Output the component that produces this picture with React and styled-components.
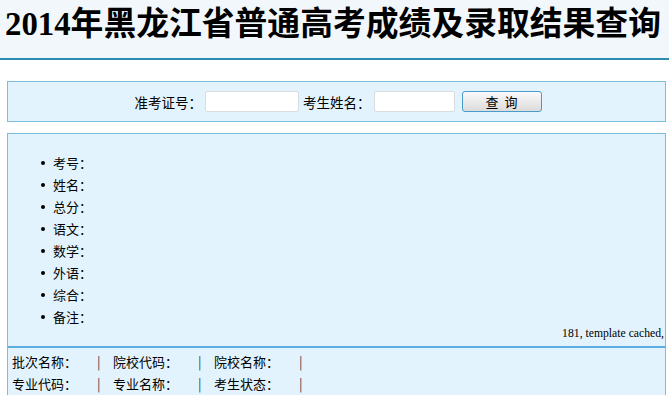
import React from 'react';
import styled, { createGlobalStyle } from 'styled-components';

// Global
const GlobalStyle = createGlobalStyle`
	html, body {
		margin: 0;
		padding: 0;
		background: #ffffff;
	}
	body {
		font-family: "Noto Sans CJK SC", "DejaVu Sans", sans-serif;
		font-size: 13px;
		color: #000;
	}
`;

// Data
const scoreItems = ['考号：', '姓名：', '总分：', '语文：', '数学：', '外语：', '综合：', '备注：'];

const admitRows = [
	['批次名称：', '院校代码：', '院校名称：'],
	['专业代码：', '专业名称：', '考生状态：'],
];

// Component
const App = () => {

	// Return
	return(
		<>
			<GlobalStyle/>
			<Header>
				<Title>2014年黑龙江省普通高考成绩及录取结果查询</Title>
			</Header>
			<Main>
				<SearchBox>
					<Label>准考证号：</Label>
					<Input type="text" $width={ 94 } />
					<Label>考生姓名：</Label>
					<Input type="text" $width={ 81 } />
					<Button type="button">查&nbsp;&nbsp;询</Button>
				</SearchBox>
				<ResultBox>
					<ScoreList>
						{
							scoreItems.map((item) => {
								return <li key={ item }>{ item }</li>;
							})
						}
					</ScoreList>
					<Note>181, template cached,</Note>
					<AdmitInfo>
						{
							admitRows.map((row, index) => {
								return(
									<AdmitRow key={ index }>
										{
											row.map((cell) => {
												return(
													<AdmitCell key={ cell }>
														<CellLabel>{ cell }</CellLabel>
														<Sep>|</Sep>
													</AdmitCell>
												);
											})
										}
									</AdmitRow>
								);
							})
						}
					</AdmitInfo>
				</ResultBox>
			</Main>
		</>
	);

};

// Styled
const Header = styled.header`
	height: 58px;
	background: #f2f7fb;
	border-bottom: 2px solid #2b8bb0;
	padding-left: 5px;
`;

const Title = styled.h1`
	margin: 0;
	font-family: "Liberation Serif", "Noto Sans CJK SC", serif;
	font-size: 32.8px;
	font-weight: bold;
	line-height: 48px;
	white-space: nowrap;
`;

const Main = styled.main`
	padding: 21px 3px 0 7px;
	display: flex;
	flex-direction: column;
	gap: 11px;
`;

const SearchBox = styled.div`
	height: 39px;
	background: #e3f3fd;
	border: 1px solid #7dbddc;
	display: flex;
	align-items: center;
	justify-content: center;
`;

const Label = styled.span`
	font-size: 13.5px;
	line-height: 20px;
	margin: 0 3px;
`;

const Input = styled.input`
	box-sizing: border-box;
	width: ${ ({ $width }) => $width }px;
	height: 21px;
	border: 1px solid #d8dde2;
	border-radius: 2px;
	background: #fff;
	padding: 0 2px;
	margin: 0 1px 0 0;
	outline: none;
`;

const Button = styled.button`
	box-sizing: border-box;
	width: 80px;
	height: 21px;
	margin-left: 6px;
	border: 1px solid #4a9cc8;
	border-radius: 3px;
	background: linear-gradient(#fafafa, #dcdcdc);
	font-family: "Noto Sans CJK SC", sans-serif;
	font-size: 13px;
	line-height: 17px;
	padding: 0;
	color: #000;
`;

const ResultBox = styled.section`
	background: #e3f3fd;
	border: 1px solid #7dbddc;
	border-bottom: none;
`;

const ScoreList = styled.ul`
	list-style: none;
	margin: 0;
	padding: 18px 0 0 33px;
	li {
		height: 22px;
		line-height: 22px;
		font-size: 13px;
		display: flex;
		align-items: center;
		&::before {
			content: '';
			width: 4px;
			height: 4px;
			border-radius: 50%;
			background: #000;
			margin-right: 8px;
		}
	}
`;

const Note = styled.div`
	font-family: "Liberation Serif", serif;
	font-size: 11.7px;
	line-height: 12px;
	text-align: right;
	padding: 0 1px 6px 0;
`;

const AdmitInfo = styled.div`
	border-top: 2px solid #5aaee2;
	padding: 3px 0 0 4px;
`;

const AdmitRow = styled.div`
	display: flex;
	height: 22px;
	line-height: 22px;
	font-size: 13px;
`;

const AdmitCell = styled.div`
	display: flex;
`;

const CellLabel = styled.span`
	width: 77px;
`;

const Sep = styled.span`
	color: #444444;
	width: 24px;
	padding-left: 8px;
	box-sizing: border-box;
`;

// Export
export default App;
